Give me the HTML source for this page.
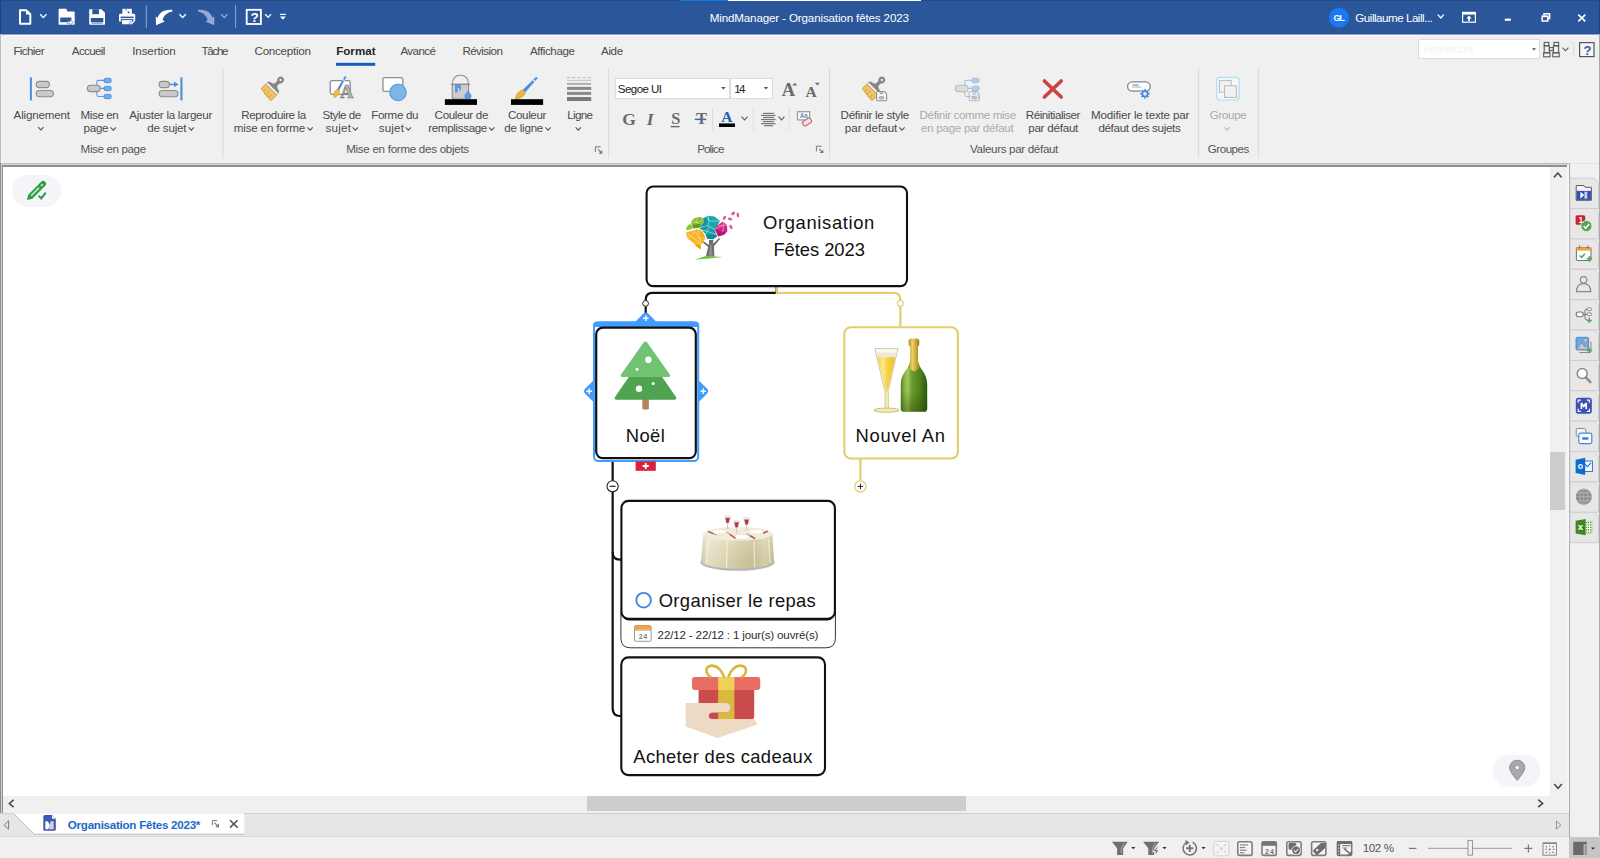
<!DOCTYPE html>
<html lang="fr">
<head>
<meta charset="utf-8">
<title>MindManager - Organisation fêtes 2023</title>
<style>
html,body{margin:0;padding:0;}
body{width:1600px;height:858px;overflow:hidden;background:#f0f0f0;font-family:"Liberation Sans",sans-serif;position:relative;}
.t{position:absolute;white-space:nowrap;line-height:1;}
.abs{position:absolute;}
svg{position:absolute;left:0;top:0;overflow:visible;}
#titlebar{position:absolute;left:0;top:0;width:1600px;height:34px;background:#2b579a;}
#ribbon{position:absolute;left:0;top:34px;width:1600px;height:129px;background:#f0f0f0;}
#canvas{position:absolute;left:3px;top:167px;width:1547px;height:629px;background:#fff;overflow:hidden;}

</style>
</head>
<body>
<div id="titlebar"><svg width="1600" height="34" viewBox="0 0 1600 34"><path d="M20,10.2 H26.2 L30.3,14.3 V23.8 H20 Z" fill="none" stroke="#fff" stroke-width="2" stroke-linejoin="round"/><path d="M26,9.6 L31,14.6 H26 Z" fill="#fff"/><polyline points="40.20,14.20 43.30,17.60 46.40,14.20" fill="none" stroke="#fff" stroke-width="1.3"/><path d="M58.6,9.6 Q58.6,8.8 59.4,8.8 H66.2 L67.6,11.6 H73.9 Q74.7,11.6 74.7,12.4 V24 Q74.7,24.8 73.9,24.8 H59.4 Q58.6,24.8 58.6,24 Z" fill="#fff"/><rect x="60.2" y="17.5" width="11.2" height="4.7" fill="#2b579a"/><path d="M67,21.4 H70 V19.8 L73.4,22.4 L70,25 V23.4 H67 Z" fill="#fff" stroke="#2b579a" stroke-width=".5"/><path d="M89.2,10 Q89.2,9.2 90,9.2 H101.4 L105,12.8 V24 Q105,24.8 104.2,24.8 H90 Q89.2,24.8 89.2,24 Z" fill="#fff"/><rect x="92.3" y="9.2" width="6.6" height="5" fill="#2b579a"/><rect x="90.9" y="18" width="12.4" height="4.4" fill="#2b579a"/><rect x="91.6" y="22.9" width="11" height="0.9" fill="#2b579a" opacity=".6"/><path d="M122.4,8.8 H131.8 V14 H122.4 Z" fill="#fff"/><path d="M124.6,9.6 l2.2,0 0,1.2 z M127.8,10.6 l2.4,2.6 -2.4,0z" fill="#2b579a"/><path d="M119,15.2 Q119,13.8 120.4,13.8 H133.8 Q135.2,13.8 135.2,15.2 V21.4 H119 Z" fill="#fff"/><rect x="120.6" y="16.6" width="13" height="1.5" fill="#2b579a"/><rect x="121.4" y="19.6" width="11.2" height="5.2" fill="#fff" stroke="#2b579a" stroke-width="1"/><path d="M129.6,21.8 l1.9,1.9 3.2,-3.4" fill="none" stroke="#2b579a" stroke-width="2.6"/><path d="M129.6,21.8 l1.9,1.9 3.2,-3.4" fill="none" stroke="#fff" stroke-width="1.5"/><rect x="145.8" y="5.2" width="1" height="22.6" fill="#91a7cd"/><rect x="235.1" y="5.2" width="1" height="22.6" fill="#91a7cd"/><path d="M172.3,9.8 C164.2,9 158.8,12.8 157.8,17.8 L155.8,16.4 L156,25.2 L164.8,21.4 L162.6,20 C163.4,16 166.6,12.8 172.3,11.4 Z" fill="#fff"/><polyline points="179.40,14.20 182.60,17.50 185.80,14.20" fill="none" stroke="#fff" stroke-width="1.3"/><path d="M197.9,9.8 C206,9 211.4,12.8 212.4,17.8 L214.4,16.4 L214.2,25.2 L205.4,21.4 L207.6,20 C206.8,16 203.6,12.8 197.9,11.4 Z" fill="#93a9cf"/><polyline points="221.20,14.20 224.30,17.50 227.40,14.20" fill="none" stroke="#93a9cf" stroke-width="1.3"/><rect x="246.7" y="9.8" width="14.2" height="14.2" fill="none" stroke="#fff" stroke-width="1.8"/><polyline points="265.20,14.20 268.10,17.40 271.00,14.20" fill="none" stroke="#fff" stroke-width="1.3"/><rect x="280" y="13.8" width="5.8" height="1.2" fill="#fff"/><polygon points="280.00,16.60 285.80,16.60 282.90,19.80" fill="#fff"/><circle cx="1339" cy="17.7" r="10" fill="#1a78f2"/><polyline points="1437.80,14.60 1440.80,18.00 1443.80,14.60" fill="none" stroke="#fff" stroke-width="1.3"/><rect x="1462.6" y="12.4" width="12.8" height="9.8" fill="none" stroke="#fff" stroke-width="1.2"/><rect x="1462.6" y="12.4" width="12.8" height="2.2" fill="#fff"/><path d="M1469,15.6 l2.8,2.8 h-1.9 v2.6 h-1.8 v-2.6 h-1.9 z" fill="#fff"/><rect x="1504.8" y="18.6" width="6" height="2.2" fill="#fff"/><path d="M1544,15.6 V13.8 H1549.6 V18.6 H1547.8" fill="none" stroke="#fff" stroke-width="1.5"/><rect x="1542.2" y="16.2" width="5.6" height="4.8" fill="none" stroke="#fff" stroke-width="1.5"/><rect x="1542.2" y="15.8" width="5.6" height="1.4" fill="#fff"/><path d="M1578.3,14.6 L1585.3,21.4 M1585.3,14.6 L1578.3,21.4" stroke="#fff" stroke-width="1.7" fill="none"/></svg><span class="t" style="left:250.60px;top:10.87px;font-size:13.5px;color:#fff;font-weight:700;">?</span><span class="t" style="left:709.70px;top:12.18px;font-size:11.6px;color:#fff;letter-spacing:-0.140px;">MindManager - Organisation fêtes 2023</span><span class="t" style="left:1333.60px;top:13.58px;font-size:9px;color:#fff;font-weight:700;letter-spacing:-1.230px;">GL</span><span class="t" style="left:1355.30px;top:11.78px;font-size:11.6px;color:#fff;letter-spacing:-0.480px;">Guillaume Laill...</span></div>
<div id="ribbon"><div class="abs" style="left:615px;top:44.3px;width:114.8px;height:20.3px;background:#fff;border:1px solid #dcdcdc;box-sizing:border-box;"></div><div class="abs" style="left:730.4px;top:44.3px;width:42.2px;height:20.3px;background:#fff;border:1px solid #dcdcdc;box-sizing:border-box;"></div><div class="abs" style="left:1418.3px;top:5.399999999999999px;width:122.2px;height:19.6px;background:#fff;border:1px solid #dcdcdc;box-sizing:border-box;"></div><svg width="1600" height="129" viewBox="0 0 1600 129"><rect x="336" y="28.799999999999997" width="39.2" height="3" fill="#185abd"/><rect x="222.5" y="34.400000000000006" width="1" height="90" fill="#dadada"/><rect x="608.1" y="34.400000000000006" width="1" height="90" fill="#dadada"/><rect x="829.0" y="34.400000000000006" width="1" height="90" fill="#dadada"/><rect x="1198.1" y="34.400000000000006" width="1" height="90" fill="#dadada"/><rect x="1258.1" y="34.400000000000006" width="1" height="90" fill="#dadada"/><rect x="29.9" y="43.3" width="2" height="23.1" fill="#4a90e2"/><rect x="36.2" y="47.400000000000006" width="13.2" height="6.2" rx="3.1" fill="#c9c9c9" stroke="#8c8c8c" stroke-width="1.1"/><rect x="36.2" y="56.5" width="17.2" height="6.2" rx="3.1" fill="#c9c9c9" stroke="#8c8c8c" stroke-width="1.1"/><polyline points="38.20,93.20 40.90,96.00 43.60,93.20" fill="none" stroke="#555" stroke-width="1.1"/><g opacity="1" transform="translate(87.4,44.099999999999994)"><path d="M12.6,10.3 H16.6 M16.6,2.3 H11.2 Q9.4,2.3 9.4,4.1 V16.6 Q9.4,18.4 11.2,18.4 H16.6" fill="none" stroke="#5b9be3" stroke-width="1.1"/><rect x="0" y="7.1" width="12.8" height="6.4" rx="3.2" fill="#c9c9c9" stroke="#8c8c8c" stroke-width="1.1"/><rect x="16.6" y="0.2" width="7.2" height="4.4" rx="1.8" fill="#73aeea" stroke="#4a90e2" stroke-width="1"/><rect x="16.6" y="8.2" width="7.2" height="4.4" rx="1.8" fill="#73aeea" stroke="#4a90e2" stroke-width="1"/><rect x="16.6" y="16.2" width="7.2" height="4.4" rx="1.8" fill="#73aeea" stroke="#4a90e2" stroke-width="1"/></g><polyline points="110.60,93.40 113.30,96.20 116.00,93.40" fill="none" stroke="#555" stroke-width="1.1"/><rect x="159.1" y="47.400000000000006" width="10.4" height="6.2" rx="3.1" fill="#c9c9c9" stroke="#8c8c8c" stroke-width="1.1"/><rect x="159.1" y="56.5" width="19" height="6.2" rx="3.1" fill="#c9c9c9" stroke="#8c8c8c" stroke-width="1.1"/><path d="M169.6,50.400000000000006 H175" stroke="#4a90e2" stroke-width="1.6"/><path d="M174,47.599999999999994 L178.6,50.400000000000006 L174,53.2 Z" fill="#4a90e2"/><rect x="180.4" y="43.3" width="2.1" height="23.1" fill="#4a90e2"/><polyline points="188.60,93.40 191.30,96.20 194.00,93.40" fill="none" stroke="#555" stroke-width="1.1"/><g transform="translate(271.1,55.5) rotate(45)"><path d="M-1.9,-11 L-1.7,-7.6 Q-1.9,-5.4 -5.6,-4.8 Q-7.9,-4.6 -7.9,-2.2 H7.9 Q7.9,-4.6 5.6,-4.8 Q1.9,-5.4 1.7,-7.6 L1.9,-11 Z" fill="#858585"/><circle cx="0" cy="-13.5" r="2.25" fill="none" stroke="#858585" stroke-width="2.1"/><rect x="-7.6" y="-2.5" width="15.2" height="2.6" fill="#f3f3f3" stroke="#9a9a9a" stroke-width=".8"/><path d="M-7.8,0.1 H7.8 V7.6 Q6.6,9 5.4,7.4 Q4,8.6 2.8,7.2 Q1.6,8.8 0.2,7.2 Q-1.2,8.6 -2.6,6.8 Q-4,8 -5.2,6.4 Q-6.6,7.4 -7.8,6 Z" fill="#eec467" stroke="#d19c3a" stroke-width=".9"/><path d="M-4.2,3.4 Q-3.4,5 -4,6.6 M-0.4,2.6 Q0.4,4.6 -0.2,6.8 M3.6,3.4 Q4.4,5 3.8,7" stroke="#d19c3a" stroke-width=".9" fill="none"/></g><polyline points="307.40,93.40 310.10,96.20 312.80,93.40" fill="none" stroke="#555" stroke-width="1.1"/><rect x="330.25" y="46.650000000000006" width="20" height="13.7" rx="1.8" fill="#fff" stroke="#8e8e8e" stroke-width="1.3"/><path d="M344.6,42.599999999999994 Q345.8,41.8 346.2,43.2 L339.2,56.2 L337.2,55.099999999999994 Z" fill="#4a90e2"/><path d="M342.6,45.599999999999994 L344.6,46.7" stroke="#dfe6ee" stroke-width="1.3"/><path d="M337,55.2 L339.4,56.5 Q340.4,60.599999999999994 334.3,63.7 Q332.6,58.2 337,55.2 Z" fill="#f0bd3e" stroke="#c98f20" stroke-width=".6"/><polyline points="352.60,93.40 355.30,96.20 358.00,93.40" fill="none" stroke="#555" stroke-width="1.1"/><rect x="382.95" y="43.650000000000006" width="19.9" height="13.8" rx="1.8" fill="#fff" stroke="#8e8e8e" stroke-width="1.3"/><circle cx="398" cy="58.400000000000006" r="8.2" fill="#7db5e8" stroke="#5b9be0" stroke-width="1.2"/><polyline points="405.60,93.40 408.30,96.20 411.00,93.40" fill="none" stroke="#555" stroke-width="1.1"/><path d="M452.4,50.400000000000006 Q452.4,41.2 460.4,41.2 Q468.4,41.2 468.4,50.400000000000006" fill="none" stroke="#8e8e8e" stroke-width="1.1"/><path d="M452.2,50.400000000000006 H468.6 V62.400000000000006 Q468.6,65 466,65 H454.8 Q452.2,65 452.2,62.400000000000006 Z" fill="#cdcdcd" stroke="#8e8e8e" stroke-width="1.1"/><path d="M455,50.8 H461 V56.400000000000006 H459.4 V54 H457.8 V58.400000000000006 H455 Z" fill="#5b9be3"/><path d="M450.8,50.400000000000006 H470" stroke="#8e8e8e" stroke-width="1.3"/><path d="M468,57 Q471.2,60.599999999999994 471.2,62 A3.2,3.2 0 0 1 464.8,62 Q464.8,60.599999999999994 468,57 Z" fill="#5b9be3" stroke="#4a8ad8" stroke-width=".6"/><rect x="444.9" y="65.2" width="32.1" height="5.7" fill="#000"/><polyline points="489.00,93.40 491.70,96.20 494.40,93.40" fill="none" stroke="#555" stroke-width="1.1"/><path d="M536,43 Q537.6,42.599999999999994 537.4,44.400000000000006 L525.6,58 L522.8,55.8 Z" fill="#4a90e2"/><path d="M533.2,46 L535,47.599999999999994" stroke="#e8e8e8" stroke-width="1.4"/><path d="M522.6,56 L525.4,58.2 Q524.4,63.599999999999994 515.6,65 Q516,58.2 522.6,56 Z" fill="#efb63c" stroke="#c98f20" stroke-width=".7"/><rect x="511" y="65.2" width="32.1" height="5.7" fill="#000"/><polyline points="545.40,93.40 548.10,96.20 550.80,93.40" fill="none" stroke="#555" stroke-width="1.1"/><path d="M567,43.599999999999994 H591.2" stroke="#bcbcbc" stroke-width="1" stroke-dasharray="3.2 2"/><rect x="567" y="45.900000000000006" width="24.2" height="0.8" fill="#b5b5b5"/><rect x="567" y="48.900000000000006" width="24.2" height="2" fill="#b0b0b0"/><rect x="567" y="52.900000000000006" width="24.2" height="3" fill="#8a8a8a"/><rect x="567" y="57.900000000000006" width="24.2" height="3" fill="#8a8a8a"/><rect x="567" y="63" width="24.2" height="4" fill="#7a7a7a"/><polyline points="575.60,93.40 578.30,96.20 581.00,93.40" fill="none" stroke="#555" stroke-width="1.1"/><path d="M595.4,118.0 V112.80000000000001 H600.6" fill="none" stroke="#777" stroke-width="1"/><path d="M598.0,115.4 L601.8,119.20000000000002" stroke="#777" stroke-width="1.1"/><path d="M602.3,116.0 V119.70000000000002 H598.6 Z" fill="#777"/><path d="M816.4,117.39999999999998 V112.19999999999999 H821.6" fill="none" stroke="#777" stroke-width="1"/><path d="M819.0,114.79999999999998 L822.8,118.6" stroke="#777" stroke-width="1.1"/><path d="M823.3,115.39999999999998 V119.1 H819.6 Z" fill="#777"/><polygon points="721.00,53.00 725.80,53.00 723.40,55.60" fill="#555"/><polygon points="763.80,53.00 768.20,53.00 766.00,55.60" fill="#555"/><polygon points="792.4,51.599999999999994 797.2,51.599999999999994 794.8,48.8" fill="#6a6a6a"/><polygon points="815,48.8 819.8,48.8 817.4,51.599999999999994" fill="#6a6a6a"/><rect x="670.6" y="91.9" width="9" height="1.4" fill="#6a6a6a"/><rect x="694.8" y="84.6" width="11.4" height="1.5" fill="#2e6cc0"/><rect x="712.0" y="74" width="1" height="22" fill="#dcdcdc"/><rect x="752.8" y="74" width="1" height="22" fill="#dcdcdc"/><rect x="788.8" y="74" width="1" height="22" fill="#dcdcdc"/><rect x="719" y="89.4" width="16" height="3.6" fill="#000"/><polyline points="741.60,82.60 744.60,86.00 747.60,82.60" fill="none" stroke="#555" stroke-width="1.1"/><rect x="763" y="78.80" width="11.0" height="1.2" fill="#777"/><rect x="761" y="80.85" width="14.6" height="1.2" fill="#777"/><rect x="763" y="82.90" width="11.0" height="1.2" fill="#777"/><rect x="761" y="84.95" width="14.6" height="1.2" fill="#777"/><rect x="763" y="87.00" width="11.0" height="1.2" fill="#777"/><rect x="761" y="89.05" width="14.6" height="1.2" fill="#777"/><rect x="764" y="91.10" width="9.0" height="1.2" fill="#777"/><polyline points="778.60,82.60 781.50,86.00 784.40,82.60" fill="none" stroke="#555" stroke-width="1.1"/><rect x="797.5" y="77.7" width="12.2" height="8.2" fill="#f7f9fa" stroke="#86a0ab" stroke-width="1.2"/><g transform="translate(807,88) rotate(-32)"><rect x="-4.6" y="-2.6" width="9.2" height="5.2" rx="1.6" fill="#f7dede" stroke="#cc6f72" stroke-width="1.2"/></g><g transform="translate(872.3,55.5) rotate(45)"><path d="M-1.9,-11 L-1.7,-7.6 Q-1.9,-5.4 -5.6,-4.8 Q-7.9,-4.6 -7.9,-2.2 H7.9 Q7.9,-4.6 5.6,-4.8 Q1.9,-5.4 1.7,-7.6 L1.9,-11 Z" fill="#858585"/><circle cx="0" cy="-13.5" r="2.25" fill="none" stroke="#858585" stroke-width="2.1"/><rect x="-7.6" y="-2.5" width="15.2" height="2.6" fill="#f3f3f3" stroke="#9a9a9a" stroke-width=".8"/><path d="M-7.8,0.1 H7.8 V7.6 Q6.6,9 5.4,7.4 Q4,8.6 2.8,7.2 Q1.6,8.8 0.2,7.2 Q-1.2,8.6 -2.6,6.8 Q-4,8 -5.2,6.4 Q-6.6,7.4 -7.8,6 Z" fill="#eec467" stroke="#d19c3a" stroke-width=".9"/><path d="M-4.2,3.4 Q-3.4,5 -4,6.6 M-0.4,2.6 Q0.4,4.6 -0.2,6.8 M3.6,3.4 Q4.4,5 3.8,7" stroke="#d19c3a" stroke-width=".9" fill="none"/></g><g opacity="1"><path d="M876.6,58.7 Q876.6,57.5 877.8000000000001,57.5 H884.2 L886.6,59.9 V65.5 Q886.6,66.7 885.4,66.7 H877.8000000000001 Q876.6,66.7 876.6,65.5 Z" fill="#fafafa" stroke="#909090" stroke-width="1.1"/><rect x="879.6" y="58.1" width="3.6" height="2.2" fill="#b0b0b0"/><rect x="879.2" y="62.7" width="4.8" height="2.2" rx="1" fill="#c8c8c8" stroke="#909090" stroke-width=".8"/></g><polyline points="899.20,93.40 901.90,96.20 904.60,93.40" fill="none" stroke="#555" stroke-width="1.1"/><g opacity="0.5" transform="translate(955.3,44.099999999999994)"><path d="M12.6,10.3 H16.6 M16.6,2.3 H11.2 Q9.4,2.3 9.4,4.1 V16.6 Q9.4,18.4 11.2,18.4 H16.6" fill="none" stroke="#5b9be3" stroke-width="1.1"/><rect x="0" y="7.1" width="12.8" height="6.4" rx="3.2" fill="#c9c9c9" stroke="#8c8c8c" stroke-width="1.1"/><rect x="16.6" y="0.2" width="7.2" height="4.4" rx="1.8" fill="#73aeea" stroke="#4a90e2" stroke-width="1"/><rect x="16.6" y="8.2" width="7.2" height="4.4" rx="1.8" fill="#73aeea" stroke="#4a90e2" stroke-width="1"/><rect x="16.6" y="16.2" width="7.2" height="4.4" rx="1.8" fill="#73aeea" stroke="#4a90e2" stroke-width="1"/></g><g opacity="0.55"><path d="M969.2,58.7 Q969.2,57.5 970.4000000000001,57.5 H976.8000000000001 L979.2,59.9 V65.5 Q979.2,66.7 978.0,66.7 H970.4000000000001 Q969.2,66.7 969.2,65.5 Z" fill="#fafafa" stroke="#909090" stroke-width="1.1"/><rect x="972.2" y="58.1" width="3.6" height="2.2" fill="#b0b0b0"/><rect x="971.8000000000001" y="62.7" width="4.8" height="2.2" rx="1" fill="#c8c8c8" stroke="#909090" stroke-width=".8"/></g><path d="M1044.4,47 L1061.2,63 M1061.2,47 L1044.4,63" stroke="#cf4040" stroke-width="3.6" stroke-linecap="round" fill="none"/><rect x="1127.6" y="47.8" width="22.6" height="9.4" rx="4.7" fill="#fff" stroke="#858585" stroke-width="1.3"/><rect x="1132.4" y="50.5" width="6.4" height="1.1" fill="#4a90e2"/><rect x="1132.4" y="52.599999999999994" width="9" height="0.9" fill="#aaa"/><circle cx="1145" cy="59.8" r="4.6" fill="#f0f0f0"/><circle cx="1145" cy="59.8" r="2.7" fill="none" stroke="#3f86dc" stroke-width="1.7"/><path d="M1148.20,59.80 L1149.90,59.80" stroke="#3f86dc" stroke-width="1.5"/><path d="M1147.26,62.06 L1148.46,63.26" stroke="#3f86dc" stroke-width="1.5"/><path d="M1145.00,63.00 L1145.00,64.70" stroke="#3f86dc" stroke-width="1.5"/><path d="M1142.74,62.06 L1141.54,63.26" stroke="#3f86dc" stroke-width="1.5"/><path d="M1141.80,59.80 L1140.10,59.80" stroke="#3f86dc" stroke-width="1.5"/><path d="M1142.74,57.54 L1141.54,56.34" stroke="#3f86dc" stroke-width="1.5"/><path d="M1145.00,56.60 L1145.00,54.90" stroke="#3f86dc" stroke-width="1.5"/><path d="M1147.26,57.54 L1148.46,56.34" stroke="#3f86dc" stroke-width="1.5"/><rect x="1216.6" y="43.400000000000006" width="22.6" height="22.6" rx="3" fill="#f4f6f7" stroke="#a9e2f3" stroke-width="1.2"/><rect x="1219.4" y="46.599999999999994" width="11.8" height="11.6" fill="#f2f2f2" stroke="#b9b9b9" stroke-width="1"/><rect x="1224.6" y="51.8" width="11.8" height="11.6" fill="#f2f2f2" stroke="#b9b9b9" stroke-width="1"/><polyline points="1224.40,93.40 1227.10,96.00 1229.80,93.40" fill="none" stroke="#b8b8b8" stroke-width="1.1"/><polygon points="1531.80,14.20 1536.20,14.20 1534.00,16.60" fill="#555"/><rect x="1544.2" y="8.399999999999999" width="4.6" height="3.4" fill="none" stroke="#5a5a5a" stroke-width="1.1"/><rect x="1554" y="8.399999999999999" width="4.6" height="3.4" fill="none" stroke="#5a5a5a" stroke-width="1.1"/><rect x="1544.2" y="11.799999999999997" width="5.2" height="7" fill="none" stroke="#5a5a5a" stroke-width="1.1"/><rect x="1553.4" y="11.799999999999997" width="5.2" height="7" fill="none" stroke="#5a5a5a" stroke-width="1.1"/><rect x="1549.4" y="13.600000000000001" width="4" height="3" fill="none" stroke="#5a5a5a" stroke-width="1.1"/><rect x="1543.6" y="18.799999999999997" width="6.4" height="4" fill="none" stroke="#5a5a5a" stroke-width="1.1"/><rect x="1552.8" y="18.799999999999997" width="6.4" height="4" fill="none" stroke="#5a5a5a" stroke-width="1.1"/><polyline points="1562.60,13.60 1565.50,16.80 1568.40,13.60" fill="none" stroke="#555" stroke-width="1.1"/><rect x="1573.2" y="8" width="1" height="15" fill="#dcdcdc"/><rect x="1579.6" y="8.600000000000001" width="14.4" height="14" fill="#f6f6f6" stroke="#555" stroke-width="1.2"/></svg><span class="t" style="left:13.40px;top:11.28px;font-size:11.6px;color:#4a4a4a;letter-spacing:-0.608px;">Fichier</span><span class="t" style="left:71.80px;top:11.28px;font-size:11.6px;color:#4a4a4a;letter-spacing:-0.638px;">Accueil</span><span class="t" style="left:132.20px;top:11.28px;font-size:11.6px;color:#4a4a4a;letter-spacing:-0.115px;">Insertion</span><span class="t" style="left:201.60px;top:11.28px;font-size:11.6px;color:#4a4a4a;letter-spacing:-1.322px;">Tâche</span><span class="t" style="left:254.50px;top:11.28px;font-size:11.6px;color:#4a4a4a;letter-spacing:-0.245px;">Conception</span><span class="t" style="left:400.40px;top:11.28px;font-size:11.6px;color:#4a4a4a;letter-spacing:-0.584px;">Avancé</span><span class="t" style="left:462.40px;top:11.28px;font-size:11.6px;color:#4a4a4a;letter-spacing:-0.560px;">Révision</span><span class="t" style="left:530.00px;top:11.28px;font-size:11.6px;color:#4a4a4a;letter-spacing:-0.399px;">Affichage</span><span class="t" style="left:601.00px;top:11.28px;font-size:11.6px;color:#4a4a4a;letter-spacing:-0.357px;">Aide</span><span class="t" style="left:336.20px;top:11.28px;font-size:11.6px;color:#262626;font-weight:700;letter-spacing:0.010px;">Format</span><span class="t" style="left:13.60px;top:75.28px;font-size:11.6px;color:#4a4a4a;letter-spacing:-0.185px;">Alignement</span><span class="t" style="left:80.60px;top:75.28px;font-size:11.6px;color:#4a4a4a;letter-spacing:-0.410px;">Mise en</span><span class="t" style="left:83.60px;top:88.48px;font-size:11.6px;color:#4a4a4a;letter-spacing:-0.283px;">page</span><span class="t" style="left:129.20px;top:75.28px;font-size:11.6px;color:#4a4a4a;letter-spacing:-0.264px;">Ajuster la largeur</span><span class="t" style="left:147.20px;top:88.48px;font-size:11.6px;color:#4a4a4a;letter-spacing:-0.180px;">de sujet</span><span class="t" style="left:80.60px;top:109.28px;font-size:11.6px;color:#555;letter-spacing:-0.369px;">Mise en page</span><span class="t" style="left:241.20px;top:75.28px;font-size:11.6px;color:#4a4a4a;letter-spacing:-0.388px;">Reproduire la</span><span class="t" style="left:233.80px;top:88.48px;font-size:11.6px;color:#4a4a4a;letter-spacing:-0.175px;">mise en forme</span><span class="t" style="-webkit-text-stroke:.7px #7d7d7d;left:340.10px;top:49.16px;font-size:18.6px;color:#b9b9b9;font-weight:700;font-family:'Liberation Serif', serif;">A</span><span class="t" style="left:322.60px;top:75.28px;font-size:11.6px;color:#4a4a4a;letter-spacing:-0.480px;">Style de</span><span class="t" style="left:325.60px;top:88.48px;font-size:11.6px;color:#4a4a4a;letter-spacing:0.212px;">sujet</span><span class="t" style="left:371.20px;top:75.28px;font-size:11.6px;color:#4a4a4a;letter-spacing:-0.325px;">Forme du</span><span class="t" style="left:378.80px;top:88.48px;font-size:11.6px;color:#4a4a4a;letter-spacing:0.162px;">sujet</span><span class="t" style="left:434.60px;top:75.28px;font-size:11.6px;color:#4a4a4a;letter-spacing:-0.330px;">Couleur de</span><span class="t" style="left:428.20px;top:88.48px;font-size:11.6px;color:#4a4a4a;letter-spacing:-0.337px;">remplissage</span><span class="t" style="left:508.00px;top:75.28px;font-size:11.6px;color:#4a4a4a;letter-spacing:-0.377px;">Couleur</span><span class="t" style="left:504.20px;top:88.48px;font-size:11.6px;color:#4a4a4a;letter-spacing:-0.211px;">de ligne</span><span class="t" style="left:567.20px;top:75.28px;font-size:11.6px;color:#4a4a4a;letter-spacing:-0.657px;">Ligne</span><span class="t" style="left:346.20px;top:109.28px;font-size:11.6px;color:#555;letter-spacing:-0.286px;">Mise en forme des objets</span><span class="t" style="left:617.80px;top:49.48px;font-size:11.6px;color:#222;letter-spacing:-0.599px;">Segoe UI</span><span class="t" style="left:734.20px;top:49.48px;font-size:11.6px;color:#222;letter-spacing:-1.758px;">14</span><span class="t" style="left:781.80px;top:47.34px;font-size:18.5px;color:#6a6a6a;font-weight:700;font-family:'Liberation Serif', serif;">A</span><span class="t" style="left:805.40px;top:49.88px;font-size:15.5px;color:#6a6a6a;font-weight:700;font-family:'Liberation Serif', serif;">A</span><span class="t" style="left:622.20px;top:76.59px;font-size:17.5px;color:#6a6a6a;font-weight:700;font-family:'Liberation Serif', serif;">G</span><span class="t" style="left:646.80px;top:76.59px;font-size:17.5px;color:#6a6a6a;font-weight:700;font-family:'Liberation Serif', serif;font-style:italic;">I</span><span class="t" style="left:671.20px;top:76.63px;font-size:16.5px;color:#6a6a6a;font-weight:700;font-family:'Liberation Serif', serif;">S</span><span class="t" style="left:696.00px;top:77.43px;font-size:16.5px;color:#6a6a6a;font-weight:700;font-family:'Liberation Serif', serif;">T</span><span class="t" style="left:721.20px;top:74.68px;font-size:15.5px;color:#2660ae;font-weight:700;font-family:'Liberation Serif', serif;">A</span><span class="t" style="left:799.80px;top:78.98px;font-size:6.4px;color:#6f93b3;font-weight:700;letter-spacing:-0.180px;">Aa</span><span class="t" style="left:697.20px;top:109.28px;font-size:11.6px;color:#555;letter-spacing:-0.886px;">Police</span><span class="t" style="left:840.60px;top:75.28px;font-size:11.6px;color:#4a4a4a;letter-spacing:-0.284px;">Définir le style</span><span class="t" style="left:844.80px;top:88.48px;font-size:11.6px;color:#4a4a4a;letter-spacing:0.037px;">par defaut</span><span class="t" style="left:919.60px;top:75.28px;font-size:11.6px;color:#ababab;letter-spacing:-0.346px;">Définir comme mise</span><span class="t" style="left:921.00px;top:88.48px;font-size:11.6px;color:#ababab;letter-spacing:-0.270px;">en page par défaut</span><span class="t" style="left:1025.80px;top:75.28px;font-size:11.6px;color:#4a4a4a;letter-spacing:-0.448px;">Réinitialiser</span><span class="t" style="left:1028.20px;top:88.48px;font-size:11.6px;color:#4a4a4a;letter-spacing:-0.230px;">par défaut</span><span class="t" style="left:1091.00px;top:75.28px;font-size:11.6px;color:#4a4a4a;letter-spacing:-0.174px;">Modifier le texte par</span><span class="t" style="left:1098.40px;top:88.48px;font-size:11.6px;color:#4a4a4a;letter-spacing:-0.332px;">défaut des sujets</span><span class="t" style="left:970.00px;top:109.28px;font-size:11.6px;color:#555;letter-spacing:-0.326px;">Valeurs par défaut</span><span class="t" style="left:1209.80px;top:75.28px;font-size:11.6px;color:#ababab;letter-spacing:-0.345px;">Groupe</span><span class="t" style="left:1207.80px;top:109.28px;font-size:11.6px;color:#555;letter-spacing:-0.487px;">Groupes</span><span class="t" style="left:1423.00px;top:9.48px;font-size:11.6px;color:#f4f4f4;letter-spacing:-0.954px;">Rechercher</span><span class="t" style="left:1583.60px;top:9.60px;font-size:13px;color:#2f5fb0;font-weight:700;">?</span></div>
<div id="canvas"><svg width="1547" height="629" viewBox="3 167 1547 629"><rect x="12" y="175" width="49" height="32" rx="16" fill="#f4f4f9"/><g transform="translate(36.4,190.6) rotate(-45)"><path d="M-13.4,0 L-8.6,-2.9 H9.6 Q12.4,-2.9 12.4,0 Q12.4,2.9 9.6,2.9 H-8.6 Z" fill="#2ea043"/><path d="M-7.4,-0.1 H3.8" stroke="#cfeed6" stroke-width="1.5"/><path d="M6.4,-0.1 H9" stroke="#cfeed6" stroke-width="1.5"/></g><path d="M38.6,195.6 L41.2,198.4 L45.8,192.6" fill="none" stroke="#2ea043" stroke-width="2.1"/><rect x="1492.6" y="754.8" width="48" height="31.6" rx="15.8" fill="#f4f4f9"/><path d="M1517.2,780.4 Q1509.6,771.6 1509.6,767.8 A7.6,7.6 0 0 1 1524.8,767.8 Q1524.8,771.6 1517.2,780.4 Z" fill="#a9a9a9" stroke="#8e8e8e" stroke-width="1"/><circle cx="1517.2" cy="767.6" r="2.3" fill="#f4f4f9" stroke="#8e8e8e" stroke-width=".8"/><path d="M776.6,287 V292.8 H652.6 Q645.7,292.8 645.7,299.6 V316" fill="none" stroke="#111" stroke-width="2.2"/><path d="M776.8,287 V292.8 H893.6 Q900.4,292.8 900.4,299.6 V327" fill="none" stroke="#e3cd6f" stroke-width="2.2"/><circle cx="645.6" cy="303.4" r="2.9" fill="#fff" stroke="#222" stroke-width="1"/><circle cx="900.4" cy="303.4" r="2.9" fill="#fff" stroke="#e3cd6f" stroke-width="1.1"/><path d="M612.65,461.6 V708.6 Q612.65,716 620,716 H621" fill="none" stroke="#111" stroke-width="2.2"/><path d="M612.65,552 Q612.65,559.6 620,559.6 H621" fill="none" stroke="#111" stroke-width="2.2"/><path d="M860.4,459 V480.6" fill="none" stroke="#e3cd6f" stroke-width="2.2"/><rect x="646.6" y="186.5" width="260.4" height="99.6" rx="6.5" fill="#fff" stroke="#111" stroke-width="2.1"/><polygon points="694.8,259.7 706.0,255.9 714.4,256.6 722.8,256.9 708.1,258.4" fill="#6cc02e"/><polygon points="706.0,255.9 708.1,247.0 702.8,242.4 704.0,241.5 708.8,244.9 709.1,240.0 713.3,240.0 713.3,243.8 718.9,237.9 720.3,238.7 714.0,246.3 714.4,256.6" fill="#6f6f6f"/><polygon points="708.8,255.7 710.3,244.2 711.4,244.2 712.4,256.0" fill="#8e8e8e"/><polygon points="693.7,243.1 701.1,244.5 700.9,249.6 696.7,247.0" fill="#f2a516"/><polygon points="685.6,232.4 698.3,229.0 702.6,232.1 705.4,237.7 701.9,243.9 693.9,243.2 687.8,238.7" fill="#f7b526"/><polygon points="698.3,229.0 702.6,232.1 705.4,237.7 701.9,243.9 699.7,238.6" fill="#f5ad1e"/><path d="M685.6,232.4 L700.4,242.8 M695.5,231.9 L699.7,238.6 L701.9,243.9 M695.5,231.9 L687.8,238.7 M698.3,229.0 L699.7,238.6 L705.4,237.7" stroke="#fde9b8" stroke-width=".55" fill="none"/><polygon points="685.9,230.0 687.1,226.0 690.0,224.1 692.2,225.3 692.8,228.2 690.7,229.6" fill="#86bf2f"/><polygon points="690.9,222.8 693.0,219.0 697.7,217.0 702.3,217.4 704.0,221.9 701.6,224.0 699.0,226.1 692.0,225.3" fill="#82bc2c"/><polygon points="692.0,225.3 699.0,223.7 701.6,224.0 699.3,227.7 693.0,228.5" fill="#5c9e26"/><path d="M693.0,219.0 L696.3,222.5 L697.7,217.0 M696.3,222.5 L701.1,221.6 L702.3,217.4 M690.9,222.8 L696.3,222.5 L699.0,223.7 M687.1,226.0 L690.7,229.6 M690.0,224.1 L692.8,228.2" stroke="#d9efb4" stroke-width=".55" fill="none"/><polygon points="699.2,227.8 704.7,224.6 708.9,226.7 714.5,229.5 702.1,230.0" fill="#148f98"/><polygon points="703.2,218.3 708.1,215.7 714.5,216.5 720.1,221.1 717.2,226.0 714.5,229.5 708.8,226.8 704.7,224.7 699.2,227.8 702.1,229.9 704.0,221.9" fill="#1aa6ac"/><polygon points="703.2,218.3 707.0,217.2 708.8,221.1 707.7,225.6 704.7,224.7 699.2,227.8 704.0,221.9" fill="#13939b"/><polygon points="702.1,229.9 708.8,227.0 714.5,229.5 716.9,236.5 713.0,239.3 707.4,238.7 705.6,234.4" fill="#1b9ea6"/><polygon points="705.6,234.4 716.1,234.4 716.9,236.5 713.0,239.3 707.4,238.7" fill="#128a93"/><path d="M707.0,217.2 L708.8,221.1 L720.1,221.1 M708.8,221.1 L707.7,225.6 L714.5,229.5 M707.7,225.6 L699.2,227.8 M702.1,229.9 L716.1,234.4 M708.8,227.0 L705.6,234.4 M708.1,215.7 L708.8,221.1" stroke="#c5eef0" stroke-width=".55" fill="none"/><polygon points="714.7,229.1 717.3,225.3 722.8,221.4 727.0,225.3 727.4,231.0 724.3,234.4 718.3,236.6" fill="#cf2a8a"/><polygon points="714.7,229.1 722.8,231.9 727.4,231.0 724.3,234.4 718.3,236.6" fill="#b81474"/><path d="M717.3,225.3 L723.5,225.3 L722.8,221.4 M723.5,225.3 L727.0,225.3 M723.5,225.3 L722.8,231.9 M714.7,229.1 L723.5,225.3" stroke="#f5c4e0" stroke-width=".55" fill="none"/><ellipse cx="724.5" cy="217.9" rx="2.3" ry="1.35" transform="rotate(-60 724.5 217.9)" fill="#e0569f"/><ellipse cx="730.1" cy="219.0" rx="2.3" ry="1.35" transform="rotate(20 730.1 219.0)" fill="#e0569f"/><ellipse cx="733.2" cy="213.4" rx="2.3" ry="1.35" transform="rotate(-40 733.2 213.4)" fill="#e0569f"/><ellipse cx="737.9" cy="215.1" rx="2.3" ry="1.35" transform="rotate(80 737.9 215.1)" fill="#e0569f"/><ellipse cx="730.9" cy="227.0" rx="2.3" ry="1.35" transform="rotate(60 730.9 227.0)" fill="#e0569f"/><path d="M634.6,322.4 L643.4,313.6 Q645.8,311.4 648.2,313.6 L657,322.4 Z" fill="#409cff"/><path d="M594,380 L585.2,388.6 Q582.8,391.2 585.2,393.8 L594,402.4 Z" fill="#409cff"/><path d="M698.2,380 L707,388.6 Q709.4,391.2 707,393.8 L698.2,402.4 Z" fill="#409cff"/><rect x="594" y="322.4" width="104.2" height="138.6" rx="4.2" fill="#fff" stroke="#409cff" stroke-width="2"/><path d="M593,327 V325.6 Q593,321.4 597.2,321.4 H695 Q699.2,321.4 699.2,325.6 V327 Z" fill="#409cff"/><rect x="596.2" y="327.7" width="99.6" height="130.4" rx="6.6" fill="#fff" stroke="#111" stroke-width="2.2"/><path d="M643.0,318.2 H648.5999999999999 M645.8,315.4 V321.0" stroke="#fff" stroke-width="1.5"/><path d="M586.4000000000001,391.2 H592.0 M589.2,388.4 V394.0" stroke="#fff" stroke-width="1.5"/><path d="M700.4000000000001,391.2 H706.0 M703.2,388.4 V394.0" stroke="#fff" stroke-width="1.5"/><rect x="642.3" y="398" width="6.6" height="11.6" rx="1.4" fill="#b3845a"/><path d="M645.4,354.6 Q646.6,354.6 647.4,355.8 L676,397 Q677.2,399.8 674.4,399.8 H616.6 Q613.6,399.8 615,397 L643.4,355.8 Q644.2,354.6 645.4,354.6 Z" fill="#4fa351"/><path d="M645.4,341.4 Q646.4,341.4 647.2,342.6 L669.6,374.2 Q670.8,377 668.2,377 H622.6 Q620,377 621.2,374.2 L643.6,342.6 Q644.4,341.4 645.4,341.4 Z" fill="#72c274"/><circle cx="648.4" cy="359.8" r="3.2" fill="#fff"/><circle cx="637" cy="369.2" r="1.5" fill="#fff"/><circle cx="639" cy="388.8" r="3.2" fill="#fff"/><circle cx="653.2" cy="383.6" r="1.5" fill="#fff"/><rect x="635.6" y="461.4" width="20.2" height="9.4" fill="#d9203c"/><path d="M642.6,466 H648.8 M645.7,463 V469" stroke="#fff" stroke-width="1.8"/><circle cx="612.6" cy="486.3" r="5.6" fill="#fff" stroke="#222" stroke-width="1.1"/><path d="M609.6,486.3 H615.6" stroke="#222" stroke-width="1.2"/><rect x="844.3" y="327.3" width="113.6" height="131.2" rx="6.5" fill="#fff" stroke="#e3cd6f" stroke-width="2.1"/><defs><linearGradient id="gB" x1="0" x2="1" y1="0" y2="0"><stop offset="0" stop-color="#4f7f1e"/><stop offset=".12" stop-color="#86b345"/><stop offset=".27" stop-color="#a7cb60"/><stop offset=".42" stop-color="#6d9e2f"/><stop offset=".7" stop-color="#55861f"/><stop offset="1" stop-color="#2e5a10"/></linearGradient><linearGradient id="gBv" x1="0" x2="0" y1="0" y2="1"><stop offset="0" stop-color="#1c3a00" stop-opacity="0"/><stop offset=".6" stop-color="#1c3a00" stop-opacity=".05"/><stop offset="1" stop-color="#1c3a00" stop-opacity=".4"/></linearGradient><linearGradient id="gF" x1="0" x2="1" y1="0" y2="0"><stop offset="0" stop-color="#b08c22"/><stop offset=".35" stop-color="#e9d266"/><stop offset=".6" stop-color="#d2b23c"/><stop offset="1" stop-color="#9c7a1e"/></linearGradient><linearGradient id="gL" x1="0" x2="1" y1="0" y2="0"><stop offset="0" stop-color="#f3cf45"/><stop offset=".3" stop-color="#fbe98c"/><stop offset=".55" stop-color="#f6d23f"/><stop offset="1" stop-color="#efbf2a"/></linearGradient></defs><path d="M910.4,360 C909.6,369 901,372 900.8,384 V408.4 Q900.8,411.8 904.2,411.8 H923.8 Q927.2,411.8 927.2,408.4 V384 C927,372 918.6,369 917.8,360 Z" fill="url(#gB)"/><path d="M910.4,360 C909.6,369 901,372 900.8,384 V408.4 Q900.8,411.8 904.2,411.8 H923.8 Q927.2,411.8 927.2,408.4 V384 C927,372 918.6,369 917.8,360 Z" fill="url(#gBv)"/><path d="M910.2,345 H918 V361.6 Q918.6,365.6 920,367.4 L914.1,371.8 L908.2,367.4 Q909.6,365.6 910.2,361.6 Z" fill="url(#gF)"/><rect x="908.6" y="338.5" width="10.7" height="8.2" rx="2.8" fill="url(#gF)"/><path d="M874.9,348.6 H897.9 L888.6,389.6 Q887.6,391.6 886.5,391.6 Q885.4,391.6 884.4,389.6 Z" fill="#fbf8ee" stroke="#cfc7ad" stroke-width="1"/><path d="M877.6,357 H895.4 L888.2,388.6 Q887.4,390.4 886.5,390.4 Q885.6,390.4 884.8,388.6 Z" fill="url(#gL)"/><path d="M876.9,352.4 H896.3 L895.4,357.2 H877.7 Z" fill="#efe5da"/><rect x="885" y="391.2" width="3.5" height="17.6" fill="#f3eaae" stroke="#d3c484" stroke-width=".7"/><ellipse cx="886.6" cy="410.2" rx="12.7" ry="2.1" fill="#f2eab4" stroke="#bfae6c" stroke-width=".8"/><circle cx="860.4" cy="486.4" r="5.6" fill="#fff" stroke="#e3cd6f" stroke-width="1.3"/><path d="M857.6,486.4 H863.2 M860.4,483.6 V489.2" stroke="#222" stroke-width="1"/><path d="M620.9,612 H835.4 V638.2 Q835.4,647.8 825.8,647.8 H630.5 Q620.9,647.8 620.9,638.2 Z" fill="#fff" stroke="#333" stroke-width="1"/><rect x="621.4" y="500.9" width="213.5" height="117.8" rx="7" fill="#fff" stroke="#111" stroke-width="2.1"/><path d="M624,617.2 Q626,619.6 629,619.6 H827.4 Q830.4,619.6 832.4,617.2" fill="none" stroke="#111" stroke-width="1.6"/><defs><linearGradient id="gT" x1="0" x2="1" y1="0" y2="0"><stop offset="0" stop-color="#d9d2ae"/><stop offset=".1" stop-color="#efead2"/><stop offset=".3" stop-color="#e6dfbf"/><stop offset=".55" stop-color="#d6cea6"/><stop offset=".72" stop-color="#cdc59b"/><stop offset=".88" stop-color="#ddd6b4"/><stop offset="1" stop-color="#c8bf96"/></linearGradient><linearGradient id="gTv" x1="0" x2="0" y1="0" y2="1"><stop offset="0" stop-color="#fff" stop-opacity=".25"/><stop offset="1" stop-color="#8a8050" stop-opacity=".12"/></linearGradient></defs><ellipse cx="737.5" cy="562.3" rx="37.2" ry="8.5" fill="#a4a4a4" opacity=".8"/><path d="M703.4,534 L701,561 A36.5,7.6 0 0 0 774,561 L772.3,534 Z" fill="url(#gT)"/><path d="M703.4,534 L701,561 A36.5,7.6 0 0 0 774,561 L772.3,534 Z" fill="url(#gTv)"/><path d="M707.6,540 L706.4,563 M727,541.6 L726.6,567.8 M754,541.6 L754.6,567.6 M768.6,539.6 L770,562.6" stroke="#fffdf2" stroke-width="1.3" opacity=".6"/><ellipse cx="737.85" cy="533.9" rx="34.5" ry="6.8" fill="#f1edd9"/><ellipse cx="718.9" cy="531.7" rx="7" ry="2.4" fill="#fff" stroke="#d8d4c4" stroke-width=".5"/><ellipse cx="756.4" cy="531.7" rx="7" ry="2.4" fill="#fff" stroke="#d8d4c4" stroke-width=".5"/><ellipse cx="741.8" cy="537" rx="7.6" ry="2.6" fill="#fff" stroke="#d8d4c4" stroke-width=".5"/><path d="M708.4,531.6 L712.6,533.4 M730.4,534.6 L735,538 M763.8,533 L767.2,531.4 M750.6,536 L754.6,538.4" stroke="#c04a52" stroke-width="1.5" stroke-linecap="round"/><path d="M712.6,533.4 L716.4,535 M726.8,532 L730.4,534.6 M746.6,533.6 L750.6,536" stroke="#9a958a" stroke-width="1"/><path d="M724.6,516.0 H730.6 L729.1,523.0 Q727.6,524.6 726.1,523.0 Z" fill="#f3ecec" stroke="#d9cfd0" stroke-width=".5"/><path d="M725.3000000000001,517.8 H729.9 L728.8000000000001,522.6 Q727.6,523.8 726.4,522.6 Z" fill="#b23a50"/><path d="M727.6,524.0 V528.0" stroke="#cfc6b4" stroke-width="1"/><path d="M725.8000000000001,528.1999999999999 H729.4" stroke="#d9d2bf" stroke-width=".9"/><path d="M733.6,520.4 H739.6 L738.1,527.4 Q736.6,529.0 735.1,527.4 Z" fill="#f3ecec" stroke="#d9cfd0" stroke-width=".5"/><path d="M734.3000000000001,522.1999999999999 H738.9 L737.8000000000001,527.0 Q736.6,528.1999999999999 735.4,527.0 Z" fill="#b23a50"/><path d="M736.6,528.4 V532.4" stroke="#cfc6b4" stroke-width="1"/><path d="M734.8000000000001,532.5999999999999 H738.4" stroke="#d9d2bf" stroke-width=".9"/><path d="M743.6,517.6 H749.6 L748.1,524.6 Q746.6,526.2 745.1,524.6 Z" fill="#f3ecec" stroke="#d9cfd0" stroke-width=".5"/><path d="M744.3000000000001,519.4 H748.9 L747.8000000000001,524.2 Q746.6,525.4 745.4,524.2 Z" fill="#b23a50"/><path d="M746.6,525.6 V529.6" stroke="#cfc6b4" stroke-width="1"/><path d="M744.8000000000001,529.8 H748.4" stroke="#d9d2bf" stroke-width=".9"/><circle cx="643.6" cy="600.2" r="7.3" fill="#fff" stroke="#3f88e4" stroke-width="1.9"/><rect x="634.5" y="625.5" width="16.6" height="15.8" rx="1.4" fill="#fff" stroke="#9a9a9a" stroke-width="1"/><path d="M634.5,629.8 V627 Q634.5,625.5 636,625.5 H649.6 Q651.1,625.5 651.1,627 V629.8 Z" fill="#f2a33c"/><rect x="634.5" y="629.8" width="16.6" height=".9" fill="#b5b5b5"/><rect x="621.3" y="657.4" width="203.7" height="117.7" rx="7" fill="#fff" stroke="#111" stroke-width="2.1"/><path d="M685.6,703 H726 Q730.8,703 730.8,707.8 Q730.8,712.4 726,712.4 H713.4 Q708.8,712.6 708.8,716 Q708.8,719 712,719 H754 L757.4,724.6 L717.6,738 L685.6,726.6 Z" fill="#eed9c4"/><path d="M698.6,689.4 H754.2 V716.4 Q754.2,719 751.6,719 H712 Q708.8,719 708.8,716 Q708.8,712.6 713.4,712.4 H726 Q730.8,712.4 730.8,707.8 Q730.8,703 726,703 H698.6 Z" fill="#c94b4c"/><path d="M718.2,689.4 H734.4 V719 H718.2 V712.4 H726 Q730.8,712.4 730.8,707.8 Q730.8,703 726,703 H718.2 Z" fill="#dab93f"/><rect x="692" y="677" width="68.2" height="13" rx="2.4" fill="#e86e63"/><rect x="718.2" y="677" width="16.2" height="13" fill="#f0d157"/><path d="M724.4,677.6 Q720,665.4 711.6,665.6 Q705.6,666 706.6,671.6 Q707.2,675.6 711.6,677.4" fill="none" stroke="#d9b63a" stroke-width="2.6"/><path d="M728,677.6 Q732.4,665.4 740.8,665.6 Q746.8,666 745.8,671.6 Q745.2,675.6 740.8,677.4" fill="none" stroke="#d9b63a" stroke-width="2.6"/></svg><span class="t" style="left:760.00px;top:47.42px;font-size:18.4px;color:#111;letter-spacing:0.643px;">Organisation</span><span class="t" style="left:770.40px;top:73.72px;font-size:18.4px;color:#111;letter-spacing:-0.053px;">Fêtes 2023</span><span class="t" style="left:622.80px;top:259.82px;font-size:18.4px;color:#111;letter-spacing:0.375px;">Noël</span><span class="t" style="left:852.50px;top:260.42px;font-size:18.4px;color:#111;letter-spacing:0.701px;">Nouvel An</span><span class="t" style="left:655.70px;top:424.72px;font-size:18.4px;color:#111;letter-spacing:0.344px;">Organiser le repas</span><span class="t" style="left:635.80px;top:466.31px;font-size:7.2px;color:#808080;font-weight:700;letter-spacing:0.416px;">24</span><span class="t" style="left:654.60px;top:461.98px;font-size:11.6px;color:#2c2c2c;letter-spacing:-0.164px;">22/12 - 22/12 : 1 jour(s) ouvré(s)</span><span class="t" style="left:630.30px;top:581.42px;font-size:18.4px;color:#111;letter-spacing:0.348px;">Acheter des cadeaux</span></div>
<div id="frame"><div class="abs" style="left:0;top:0;width:1px;height:34px;background:#213f74"></div><div class="abs" style="left:1599px;top:0;width:1px;height:34px;background:#213f74"></div><div class="abs" style="left:0;top:0;width:1600px;height:1px;background:#244a86"></div><div class="abs" style="left:0;top:33px;width:1600px;height:1px;background:#265195"></div><div class="abs" style="left:0;top:34px;width:1600px;height:1px;background:#8fa5ca"></div><div class="abs" style="left:1px;top:35px;width:1598px;height:1px;background:#f8f8f7"></div><div class="abs" style="left:1px;top:36px;width:1px;height:127px;background:#f6f6f6"></div><div class="abs" style="left:0;top:34px;width:1px;height:129px;background:#b9b9b9"></div><div class="abs" style="left:1599px;top:34px;width:1px;height:802px;background:#a9a9a9"></div><div class="abs" style="left:0;top:163px;width:1570px;height:1px;background:#bdbdbd"></div><div class="abs" style="left:1570px;top:163px;width:29px;height:1px;background:#e4e4e4"></div><div class="abs" style="left:1px;top:164px;width:1567px;height:1px;background:#d6d6d6"></div><div class="abs" style="left:0;top:163px;width:1px;height:673px;background:#8b8b8b"></div><div class="abs" style="left:1px;top:164px;width:1px;height:649px;background:#d2d2d2"></div><div class="abs" style="left:2px;top:165px;width:1px;height:648px;background:#8e8e8e"></div><div class="abs" style="left:2px;top:165px;width:1565px;height:2px;background:#8f8f8f"></div><div class="abs" style="left:680px;top:0;width:47.5px;height:1.4px;background:#0a7be0"></div><div class="abs" style="left:727.5px;top:0;width:193.5px;height:1.4px;background:#fff"></div><div class="abs" style="left:1550px;top:167px;width:17px;height:628px;background:#f0f0f0"></div><div class="abs" style="left:1550px;top:452px;width:15px;height:58.4px;background:#cdcdcd"></div><div class="abs" style="left:1567px;top:165px;width:1.7px;height:648px;background:#f7f7f7"></div><div class="abs" style="left:1568.7px;top:164px;width:1.3px;height:673px;background:#a9a9a9"></div><div class="abs" style="left:3px;top:796px;width:1565px;height:17px;background:#f0f0f0"></div><div class="abs" style="left:587px;top:796.2px;width:379px;height:15px;background:#cdcdcd"></div><div class="abs" style="left:0;top:813px;width:1568.7px;height:24px;background:#e6e6e6;border-top:1px solid #cfcfcf;border-bottom:1px solid #dadada;box-sizing:border-box"></div><div class="abs" style="left:0;top:837px;width:1600px;height:21px;background:#f0f0f0"></div><div class="abs" style="left:1569px;top:837.4px;width:31px;height:20.6px;background:#c6c6c6"></div><svg width="1600" height="858" viewBox="0 0 1600 858" style="pointer-events:none"><polyline points="1554,177.4 1557.8,173 1561.6,177.4" fill="none" stroke="#555" stroke-width="1.7"/><polyline points="1554.2,784 1558,788.2 1561.8,784" fill="none" stroke="#4a4a4a" stroke-width="1.6"/><polyline points="13.6,799.8 9.4,803.5 13.6,807.2" fill="none" stroke="#4a4a4a" stroke-width="1.6"/><polyline points="1538.2,799.7 1542.6,803.4 1538.2,807.1" fill="none" stroke="#4a4a4a" stroke-width="1.6"/><path d="M13.4,813.2 H242.6 Q244.4,813.2 244.4,815 V833.8 H33.6 Z" fill="#fff"/><path d="M13.4,813.4 L33.8,833.8" fill="none" stroke="#b4b4b4" stroke-width=".8"/><path d="M33.8,834.3 H244.6" fill="none" stroke="#c9c9c9" stroke-width="1.2"/><path d="M8.6,820.8 L4.2,825 L8.6,829.2 Z" fill="#e6e6e6" stroke="#7a7a7a" stroke-width="1"/><path d="M1556.4,821 L1560.8,825 L1556.4,829 Z" fill="#e6e6e6" stroke="#8a8a8a" stroke-width=".9"/><path d="M43.3,816.6 Q43.3,815 44.9,815 H52 L55.8,818.8 V829.2 Q55.8,830.8 54.2,830.8 H44.9 Q43.3,830.8 43.3,829.2 Z" fill="#3f57b5"/><path d="M52,815 L55.8,818.8 H52 Z" fill="#eef1fb"/><path d="M45.3,821.3 H47.9 L50,825.4 L47.9,829.3 H45.3 Z" fill="#fff"/><path d="M53.7,821.3 H50.7 L48.7,829.3 H53.7 Z" fill="#d2d2d2"/><path d="M212.4,825.2 V820.6 H217" fill="none" stroke="#777" stroke-width="1"/><path d="M214.4,822.6 L218.4,826.6" stroke="#777" stroke-width="1.1"/><path d="M219,823.4 V827.2 H215.2 Z" fill="#777"/><path d="M230,820.2 L237.6,827.6 M237.6,820.2 L230,827.6" stroke="#555" stroke-width="1.5"/><path d="M1570,178.20 H1593.8 L1598.6,182.80 V208.57 H1570 Z" fill="#e7e7e7" stroke="#cbcbcb" stroke-width=".9"/><path d="M1570,208.57 H1593.8 L1598.6,213.17 V238.94 H1570 Z" fill="#e7e7e7" stroke="#cbcbcb" stroke-width=".9"/><path d="M1570,238.94 H1593.8 L1598.6,243.54 V269.31 H1570 Z" fill="#e7e7e7" stroke="#cbcbcb" stroke-width=".9"/><path d="M1570,269.31 H1593.8 L1598.6,273.91 V299.68 H1570 Z" fill="#e7e7e7" stroke="#cbcbcb" stroke-width=".9"/><path d="M1570,299.68 H1593.8 L1598.6,304.28 V330.05 H1570 Z" fill="#e7e7e7" stroke="#cbcbcb" stroke-width=".9"/><path d="M1570,330.05 H1593.8 L1598.6,334.65 V360.42 H1570 Z" fill="#e7e7e7" stroke="#cbcbcb" stroke-width=".9"/><path d="M1570,360.42 H1593.8 L1598.6,365.02 V390.79 H1570 Z" fill="#e7e7e7" stroke="#cbcbcb" stroke-width=".9"/><path d="M1570,390.79 H1593.8 L1598.6,395.39 V421.16 H1570 Z" fill="#e7e7e7" stroke="#cbcbcb" stroke-width=".9"/><path d="M1570,421.16 H1593.8 L1598.6,425.76 V451.53 H1570 Z" fill="#e7e7e7" stroke="#cbcbcb" stroke-width=".9"/><path d="M1570,451.53 H1593.8 L1598.6,456.13 V481.90 H1570 Z" fill="#e7e7e7" stroke="#cbcbcb" stroke-width=".9"/><path d="M1570,481.90 H1593.8 L1598.6,486.50 V512.27 H1570 Z" fill="#e7e7e7" stroke="#cbcbcb" stroke-width=".9"/><path d="M1570,512.27 H1593.8 L1598.6,516.87 V542.64 H1570 Z" fill="#e7e7e7" stroke="#cbcbcb" stroke-width=".9"/><path d="M1576.2,185.5 H1584 L1585.2,187.29999999999998 H1591.4 V200.29999999999998 H1576.2 Z" fill="#f4f4f4" stroke="#5a5a5a" stroke-width="1"/><rect x="1576.7" y="190.9" width="14.2" height="9" fill="#2f50b4"/><path d="M1580.4,191.7 L1584.2,195.1 L1580.4,198.7 Z" fill="#fff"/><rect x="1584.4" y="191.7" width="2.9" height="7" fill="#c9cfe4"/><rect x="1575.6" y="215.27" width="9.6" height="9.6" rx="1.6" fill="#c9252d"/><circle cx="1586.4" cy="226.07" r="5.6" fill="#4ea852" stroke="#f0f0f0" stroke-width=".8"/><path d="M1583.6,226.07 L1585.6,228.27 L1589.2,224.07" fill="none" stroke="#fff" stroke-width="1.5"/><rect x="1576.4" y="247.44" width="14.6" height="13" rx="1.2" fill="#fff" stroke="#777" stroke-width="1.1"/><rect x="1576.4" y="247.44" width="14.6" height="3.2" fill="#f2a33c"/><path d="M1579.6,245.44 V248.44 M1587.8,245.44 V248.44" stroke="#777" stroke-width="1.2"/><path d="M1579.6,255.44 L1581.6,257.44 L1585,253.64000000000001" fill="none" stroke="#4ea852" stroke-width="1.5"/><path d="M1586.6,258.84000000000003 H1592.2 M1589.4,256.04 V261.64" stroke="#4ea852" stroke-width="1.5"/><circle cx="1583.6" cy="279.81" r="3.2" fill="none" stroke="#8a8a8a" stroke-width="1.2"/><path d="M1576.4,291.60999999999996 Q1576.8,283.60999999999996 1583.6,283.60999999999996 Q1590.4,283.60999999999996 1590.8,291.60999999999996 Z" fill="none" stroke="#8a8a8a" stroke-width="1.2"/><rect x="1576.2" y="311.97999999999996" width="7" height="4.8" rx="2.2" fill="#fff" stroke="#777" stroke-width="1.1"/><path d="M1583.2,314.38 H1587 M1587,309.38 H1586 Q1585,309.38 1585,310.38 V318.38 Q1585,319.38 1586,319.38 H1587" fill="none" stroke="#777" stroke-width="1"/><rect x="1587" y="307.97999999999996" width="4.6" height="2.6" rx="1.2" fill="#fff" stroke="#777" stroke-width=".9"/><rect x="1587" y="312.97999999999996" width="4.6" height="2.6" rx="1.2" fill="#fff" stroke="#777" stroke-width=".9"/><path d="M1586.6,320.38 H1592 M1589.3,317.68 V323.08" stroke="#4ea852" stroke-width="1.5"/><path d="M1579.4,352.54999999999995 H1589.6 Q1591,352.54999999999995 1591,351.1499999999999 V341.54999999999995" fill="none" stroke="#8a8a8a" stroke-width="1"/><rect x="1576" y="337.3499999999999" width="12.6" height="12.6" rx="1.4" fill="#6da6e8" stroke="#4a80c8" stroke-width=".9"/><path d="M1577,349.3499999999999 L1581.6,342.94999999999993 L1585,347.3499999999999 L1586.4,345.74999999999994 L1588,349.3499999999999 Z" fill="#c9c9c9" stroke="#8a8a8a" stroke-width=".6"/><circle cx="1585.6" cy="340.3499999999999" r="1.3" fill="#f6c84a"/><path d="M1586.6,350.54999999999995 H1592.2 M1589.4,347.74999999999994 V353.3499999999999" stroke="#4ea852" stroke-width="1.5"/><circle cx="1582.2" cy="373.5199999999999" r="5" fill="#fff" stroke="#8a8a8a" stroke-width="1.5"/><path d="M1586,377.5199999999999 L1590.4,382.11999999999995" stroke="#8a8a8a" stroke-width="2.4" stroke-linecap="round"/><rect x="1575.8" y="397.68999999999994" width="16" height="16" rx="2.6" fill="#3c50b8"/><path d="M1578.2,402.68999999999994 V400.0899999999999 H1580.8 M1586.8,400.0899999999999 H1589.4 V402.68999999999994 M1589.4,408.68999999999994 V411.28999999999996 H1586.8 M1580.8,411.28999999999996 H1578.2 V408.68999999999994" fill="none" stroke="#fff" stroke-width="1.2"/><path d="M1580.6,402.68999999999994 H1582.2 L1583.8,404.88999999999993 L1585.4,402.68999999999994 H1587 V408.88999999999993 H1585.4 V405.68999999999994 L1583.8,407.68999999999994 L1582.2,405.68999999999994 V408.88999999999993 H1580.6 Z" fill="#fff"/><rect x="1576.2" y="428.4599999999999" width="9.6" height="8" rx="1.4" fill="#f4f4f4" stroke="#8a8a8a" stroke-width="1"/><rect x="1578.8" y="433.05999999999995" width="13" height="10.6" rx="1.8" fill="#fff" stroke="#4a86d8" stroke-width="1.2"/><rect x="1582" y="437.25999999999993" width="6.6" height="2.4" rx=".8" fill="#3f7fd6"/><rect x="1583" y="461.03" width="9.4" height="10.4" fill="#fff" stroke="#1f74d0" stroke-width="1"/><path d="M1584.6,463.8299999999999 L1587.4,466.62999999999994 L1591,462.8299999999999" fill="none" stroke="#1f74d0" stroke-width="1.1"/><path d="M1575.6,459.8299999999999 L1585.2,457.8299999999999 V475.03 L1575.6,473.03 Z" fill="#0f6ccf"/><circle cx="1583.8" cy="496.79999999999995" r="8" fill="#8c8c8c"/><path d="M1575.8,496.79999999999995 H1591.8 M1577,492.79999999999995 H1590.6 M1577,500.79999999999995 H1590.6 M1583.8,488.79999999999995 V504.79999999999995" stroke="#b9b9b9" stroke-width=".8" fill="none"/><ellipse cx="1583.8" cy="496.79999999999995" rx="4" ry="8" fill="none" stroke="#b9b9b9" stroke-width=".8"/><rect x="1584" y="521.17" width="8" height="12" fill="#fff" stroke="#9cc48a" stroke-width=".6"/><path d="M1585.4,522.57 H1591.4" stroke="#4f9c2e" stroke-width="1.3" stroke-dasharray="1.4 .9"/><path d="M1585.4,524.97 H1591.4" stroke="#4f9c2e" stroke-width="1.3" stroke-dasharray="1.4 .9"/><path d="M1585.4,527.37 H1591.4" stroke="#4f9c2e" stroke-width="1.3" stroke-dasharray="1.4 .9"/><path d="M1585.4,529.77 H1591.4" stroke="#4f9c2e" stroke-width="1.3" stroke-dasharray="1.4 .9"/><path d="M1585.4,532.17 H1591.4" stroke="#4f9c2e" stroke-width="1.3" stroke-dasharray="1.4 .9"/><path d="M1575.6,520.77 L1585.6,518.9699999999999 V535.37 L1575.6,533.5699999999999 Z" fill="#3f8a1f"/><path d="M1111.9,841.8 H1127.8000000000002 L1123.1000000000001,848.2 V855.1 H1117.1000000000001 V848.2 Z" fill="#6f6f6f"/><path d="M1124.5,843.4 Q1121.3000000000002,846.6 1121.2,849.4 V853.4" stroke="#a5a5a5" stroke-width="1.1" fill="none"/><polygon points="1131.20,847.00 1135.40,847.00 1133.30,849.20" fill="#333"/><path d="M1143.1,841.8 H1159.0 L1154.3,848.2 V855.1 H1148.3 V848.2 Z" fill="#6f6f6f"/><path d="M1155.6999999999998,843.4 Q1152.5,846.6 1152.3999999999999,849.4 V853.4" stroke="#a5a5a5" stroke-width="1.1" fill="none"/><path d="M1157.6,846 L1153,851.6 H1155.6 L1154.2,856 L1159.2,850 H1156.6 L1158.8,846 Z" fill="#6a6a6a" stroke="#f0f0f0" stroke-width=".9"/><polygon points="1162.40,847.00 1166.60,847.00 1164.50,849.20" fill="#333"/><path d="M1186.2,842.6 A6.7,6.7 0 1 0 1192.6,842.2" fill="none" stroke="#757575" stroke-width="1.5"/><path d="M1185.2,840 L1189.6,842.2 L1186.2,845.2 Z" fill="#757575"/><path d="M1186.1,848.3 H1193.4 M1189.75,844.7 V852" stroke="#757575" stroke-width="1.9"/><polygon points="1201.40,847.00 1205.60,847.00 1203.50,849.20" fill="#333"/><rect x="1213.8" y="841.4" width="15" height="14.4" rx="1.6" fill="#f4f4f4" stroke="#d2d2d2" stroke-width="1"/><circle cx="1221.3" cy="848.6" r="1.6" fill="#cfcfcf"/><path d="M1216.6,844 l2,2 M1226,844 l-2,2 M1216.6,853.2 l2,-2 M1226,853.2 l-2,-2" stroke="#cfcfcf" stroke-width="1.2"/><rect x="1237.8" y="841.8" width="14.3" height="13.6" rx="1.8" fill="#f4f4f4" stroke="#7e7e7e" stroke-width="1.6"/><path d="M1240,845 H1248 M1240,847.6 H1245 M1240,850.2 H1246.6 M1240,852.8 H1244.4" stroke="#757575" stroke-width="1"/><rect x="1262.0" y="841.8" width="14.3" height="13.6" rx="1.8" fill="#f4f4f4" stroke="#7e7e7e" stroke-width="1.6"/><rect x="1261.8" y="841.6" width="14.6" height="4.2" fill="#757575"/><rect x="1286.8" y="841.8" width="14.3" height="13.6" rx="1.8" fill="#f4f4f4" stroke="#7e7e7e" stroke-width="1.6"/><rect x="1288.6" y="842.9" width="7.6" height="6.8" rx="1.4" fill="#6c6c6c"/><circle cx="1296.1" cy="850.3" r="4.3" fill="#6c6c6c" stroke="#f4f4f4" stroke-width=".8"/><path d="M1294,850.4 l1.6,1.6 2.6,-3" stroke="#f4f4f4" stroke-width="1.1" fill="none"/><rect x="1311.6" y="841.8" width="14.3" height="13.6" rx="1.8" fill="#f4f4f4" stroke="#7e7e7e" stroke-width="1.6"/><path d="M1313.2,850.2 L1320.4,843.6 Q1320.9,843.1 1321.6,843.1 H1324.4 Q1325.2,843.1 1325.2,843.9 V847.2 Q1325.2,847.9 1324.7,848.4 L1317.6,854.8 Q1317,855.3 1316.4,854.7 L1313.2,851.4 Q1312.7,850.8 1313.2,850.2 Z" fill="#6c6c6c"/><ellipse cx="1317.2" cy="850" rx="1.5" ry=".9" transform="rotate(-42 1317.2 850)" fill="#f4f4f4"/><rect x="1337.3999999999999" y="841.8" width="14.3" height="13.6" rx="1.8" fill="#f4f4f4" stroke="#7e7e7e" stroke-width="1.6"/><rect x="1337.2" y="841.2" width="14.8" height="2.8" fill="#6c6c6c"/><rect x="1337.2" y="841.2" width="3" height="14.6" fill="#6c6c6c"/><path d="M1338.7,845.2 v.01 M1338.7,848.2 v.01 M1338.7,851.2 v.01 M1338.7,854 v.01" stroke="#f0f0f0" stroke-width="1.2" stroke-linecap="round"/><path d="M1342,845.6 H1350.4 M1342.4,848 H1347.4" stroke="#8a8a8a" stroke-width="1.1"/><path d="M1344.2,848.6 L1349.6,853.2" stroke="#6c6c6c" stroke-width="1.5"/><path d="M1347,855.4 H1351.6 V851 Z" fill="#6c6c6c"/><rect x="1409" y="847.8" width="7.4" height="1.2" fill="#777"/><rect x="1427.8" y="847.8" width="84.4" height="1" fill="#9a9a9a"/><rect x="1468" y="840.4" width="4.4" height="14.8" fill="#f2f2f2" stroke="#8a8a8a" stroke-width=".9"/><path d="M1524.4,848.4 H1532.4 M1528.4,844.4 V852.4" stroke="#777" stroke-width="1.2"/><rect x="1543" y="843" width="13.4" height="12.2" fill="#f4f4f4" stroke="#858585" stroke-width="1"/><rect x="1543" y="842.6" width="13.4" height="1.4" fill="#858585"/><circle cx="1549.7" cy="849.4" r="1.1" fill="#8a8a8a"/><path d="M1545.6,846 l1.6,1.4 M1553.8,846 l-1.6,1.4 M1545.6,853 l1.6,-1.4 M1553.8,853 l-1.6,-1.4 M1549.7,845.2 v1.6 M1549.7,852.2 v1.6 M1545,849.4 h1.6 M1552.8,849.4 h1.6" stroke="#8a8a8a" stroke-width="1.1"/><path d="M1573.2,841.8 H1586.8 V844.4 H1583.6 V855 H1573.2 Z" fill="#6a6a6a"/><path d="M1584.6,845.4 H1586.8 V855 H1584.6 Z" fill="#6a6a6a" opacity=".55"/><polygon points="1591.00,847.60 1595.00,847.60 1593.00,849.80" fill="#333"/></svg><span class="t" style="left:67.80px;top:818.58px;font-size:11.6px;color:#1b68c8;font-weight:700;letter-spacing:-0.261px;">Organisation Fêtes 2023*</span><span class="t" style="left:1578.60px;top:215.59px;font-size:8.6px;color:#fff;font-weight:700;">1</span><span class="t" style="left:1577.80px;top:462.15px;font-size:8.6px;color:#fff;font-weight:700;">o</span><span class="t" style="left:1577.80px;top:522.33px;font-size:9.5px;color:#fff;font-weight:700;">x</span><span class="t" style="left:1265.00px;top:847.77px;font-size:7px;color:#757575;font-weight:700;letter-spacing:1.013px;">24</span><span class="t" style="left:1362.80px;top:841.78px;font-size:11.6px;color:#555;letter-spacing:-0.432px;">102 %</span></div>
</body>
</html>
